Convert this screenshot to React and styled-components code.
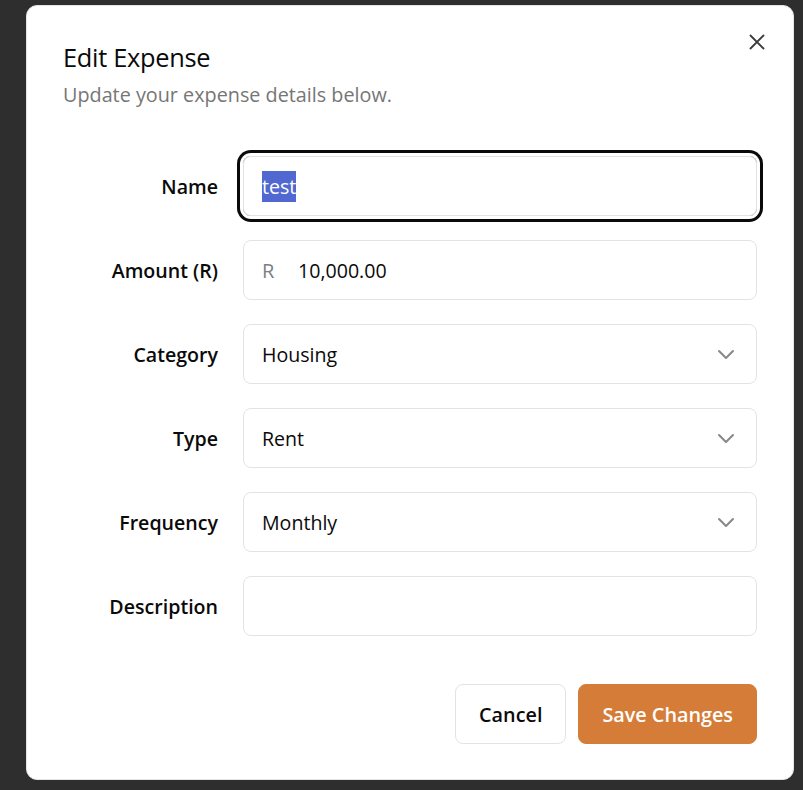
import React from "react"
import styled, { createGlobalStyle } from "styled-components"

const Global = createGlobalStyle`
  html, body {
    margin: 0;
    padding: 0;
    background: #2e2e2e;
    font-family: "Segoe UI", "Open Sans", "Noto Sans", sans-serif;
    color: #0a0a0a;
  }
`

const Page = styled.div`
  height: 790px;
  padding: 5px 0 0 26px;
  box-sizing: border-box;
  overflow: hidden;
`

const Dialog = styled.div`
  position: relative;
  width: 768px;
  height: 775px;
  box-sizing: border-box;
  background: #fff;
  border-radius: 11px;
  border: 1px solid #e4e4e4;
  padding: 36px 36px 36px 36px;
  display: flex;
  flex-direction: column;
`

const Close = styled.button`
  position: absolute;
  top: 26px;
  right: 26px;
  width: 20px;
  height: 20px;
  padding: 0;
  border: 0;
  background: none;
  color: #3a3a3a;
  display: flex;
  align-items: center;
  justify-content: center;
`

const Header = styled.div`
  display: flex;
  flex-direction: column;
  gap: 10px;
`

const Title = styled.h2`
  margin: 0;
  font-size: 25.4px;
  font-weight: 500;
  line-height: 30px;
  letter-spacing: -0.3px;
`

const Subtitle = styled.p`
  margin: 0;
  font-size: 19.8px;
  line-height: 26px;
  color: #767676;
`

const Form = styled.div`
  margin-top: 48px;
  display: grid;
  grid-template-columns: 155px 1fr;
  column-gap: 25px;
  row-gap: 24px;
  align-items: center;
`

const Label = styled.label`
  text-align: right;
  font-size: 19.6px;
  font-weight: 600;
`

const Field = styled.div`
  height: 60px;
  box-sizing: border-box;
  border: 1px solid #e3e3e3;
  border-radius: 8px;
  padding: 0 18px;
  display: flex;
  align-items: center;
  font-size: 19.6px;
  box-shadow: ${p => (p.$focused ? "0 0 0 3px #fff, 0 0 0 6px #0a0a0a" : "none")};
`

const Prefix = styled.span`
  color: #7a7f87;
  width: 36px;
  font-size: 20px;
`

const Value = styled.span`
  flex: 1;
`

const Selected = styled.span`
  background: #5068cf;
  color: #fff;
  padding: 2px 0;
`

const Chevron = styled.svg`
  color: #888;
  flex-shrink: 0;
`

const Footer = styled.div`
  margin-top: 48px;
  display: flex;
  justify-content: flex-end;
  gap: 12px;
`

const Button = styled.button`
  height: 60px;
  box-sizing: border-box;
  padding: 0 ${p => (p.$primary ? "23px" : "23px")};
  border-radius: 8px;
  font-family: inherit;
  font-size: 19.8px;
  font-weight: 600;
  border: 1px solid ${p => (p.$primary ? "#d57d38" : "#e3e3e3")};
  background: ${p => (p.$primary ? "#d57d38" : "#fff")};
  color: ${p => (p.$primary ? "#fff" : "#0a0a0a")};
`

const Down = () => (
  <Chevron width="24" height="24" viewBox="0 0 24 24" fill="none" stroke="currentColor" strokeWidth="2" strokeLinecap="round" strokeLinejoin="round">
    <path d="M5 9l7 7 7-7" />
  </Chevron>
)

const rows = [
  { label: "Name", value: <Selected>test</Selected>, focused: true },
  { label: "Amount (R)", prefix: "R", value: "10,000.00" },
  { label: "Category", value: "Housing", select: true },
  { label: "Type", value: "Rent", select: true },
  { label: "Frequency", value: "Monthly", select: true },
  { label: "Description", value: "" },
]

export default function App() {
  return (
    <>
      <Global />
      <Page>
        <Dialog>
          <Close aria-label="Close">
            <svg width="20" height="20" viewBox="0 0 20 20" fill="none" stroke="currentColor" strokeWidth="1.8" strokeLinecap="round">
              <path d="M3.5 3.5l13 13M16.5 3.5l-13 13" />
            </svg>
          </Close>
          <Header>
            <Title>Edit Expense</Title>
            <Subtitle>Update your expense details below.</Subtitle>
          </Header>
          <Form>
            {rows.map(r => (
              <React.Fragment key={r.label}>
                <Label>{r.label}</Label>
                <Field $focused={r.focused}>
                  {r.prefix && <Prefix>{r.prefix}</Prefix>}
                  <Value>{r.value}</Value>
                  {r.select && <Down />}
                </Field>
              </React.Fragment>
            ))}
          </Form>
          <Footer>
            <Button>Cancel</Button>
            <Button $primary>Save Changes</Button>
          </Footer>
        </Dialog>
      </Page>
    </>
  )
}
